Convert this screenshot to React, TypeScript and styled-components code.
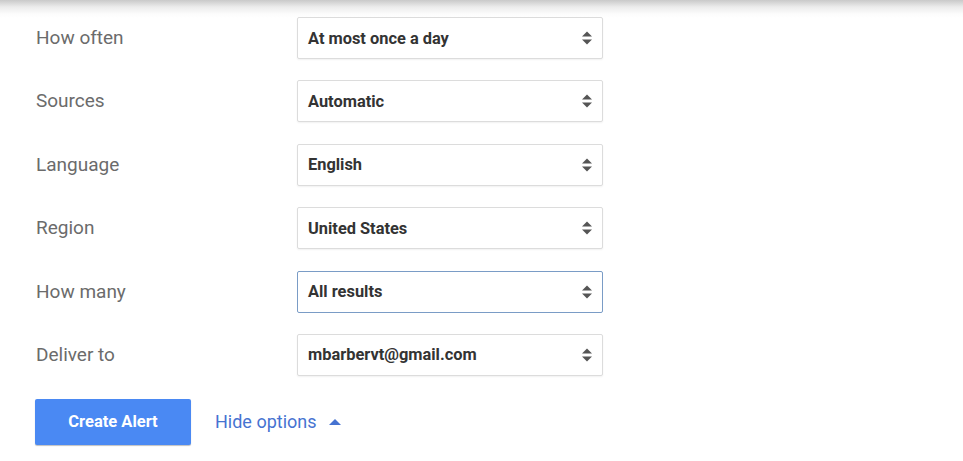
import React from "react";
import styled, { createGlobalStyle } from "styled-components";

const Global = createGlobalStyle`
  html, body { margin: 0; padding: 0; }
  body {
    background: linear-gradient(#c9c9c9 0px, #ececec 7px, #fcfcfc 14px, #ffffff 18px) no-repeat;
    background-color: #fff;
    font-family: Roboto, "Noto Sans", Arial, sans-serif;
    width: 963px;
    height: 461px;
    overflow: hidden;
  }
`;

const Page = styled.div`
  padding: 17px 0 0 35px;
  display: flex;
  flex-direction: column;
`;

const Form = styled.div`
  display: flex;
  flex-direction: column;
  gap: 21.4px;
`;

const Row = styled.div`
  display: grid;
  grid-template-columns: 262px 306px;
  align-items: center;
  height: 42px;
`;

const Label = styled.div`
  font-size: 19px;
  color: #6b6b6b;
  padding-left: 1px;
  margin-top: -1px;
`;

const Select = styled.div<{ $focused?: boolean }>`
  box-sizing: border-box;
  height: 42px;
  display: flex;
  align-items: center;
  justify-content: space-between;
  padding: 0 9px 0 10px;
  border: 1px solid ${(p) => (p.$focused ? "#7a9cc6" : "#dcdcdc")};
  border-radius: 2px;
  box-shadow: ${(p) => (p.$focused ? "none" : "0 1px 2px rgba(0,0,0,0.06)")};
  background: #fff;
  font-size: 16.4px;
  font-weight: 700;
  color: #333;
`;

const Arrows = () => (
  <svg width="12" height="16" viewBox="0 0 12 16">
    <path d="M6 1.5 L11 6.5 H1 Z" fill="#555" />
    <path d="M6 14.5 L11 9.5 H1 Z" fill="#555" />
  </svg>
);

const Actions = styled.div`
  display: flex;
  align-items: center;
  margin-top: 23px;
  gap: 24px;
`;

const Button = styled.button`
  width: 156px;
  height: 46px;
  border: none;
  border-radius: 2px;
  background: #4a89f3;
  box-shadow: 0 1px 1px rgba(0, 0, 0, 0.25);
  color: #fff;
  font-family: Roboto, Arial, sans-serif;
  font-size: 16.5px;
  font-weight: 700;
  cursor: pointer;
`;

const Link = styled.span`
  color: #4673d1;
  font-size: 18px;
  display: flex;
  align-items: center;
  gap: 11px;
`;

const rows = [
  { label: "How often", value: "At most once a day" },
  { label: "Sources", value: "Automatic" },
  { label: "Language", value: "English" },
  { label: "Region", value: "United States" },
  { label: "How many", value: "All results", focused: true },
  { label: "Deliver to", value: "mbarbervt@gmail.com" },
];

export default function App() {
  return (
    <>
      <Global />
      <Page>
        <Form>
          {rows.map((r) => (
            <Row key={r.label}>
              <Label>{r.label}</Label>
              <Select $focused={r.focused}>
                <span>{r.value}</span>
                <Arrows />
              </Select>
            </Row>
          ))}
        </Form>
        <Actions>
          <Button>Create Alert</Button>
          <Link>
            Hide options
            <svg width="14" height="8" viewBox="0 0 14 8">
              <path d="M7 1 L13 7 H1 Z" fill="#4673d1" />
            </svg>
          </Link>
        </Actions>
      </Page>
    </>
  );
}
